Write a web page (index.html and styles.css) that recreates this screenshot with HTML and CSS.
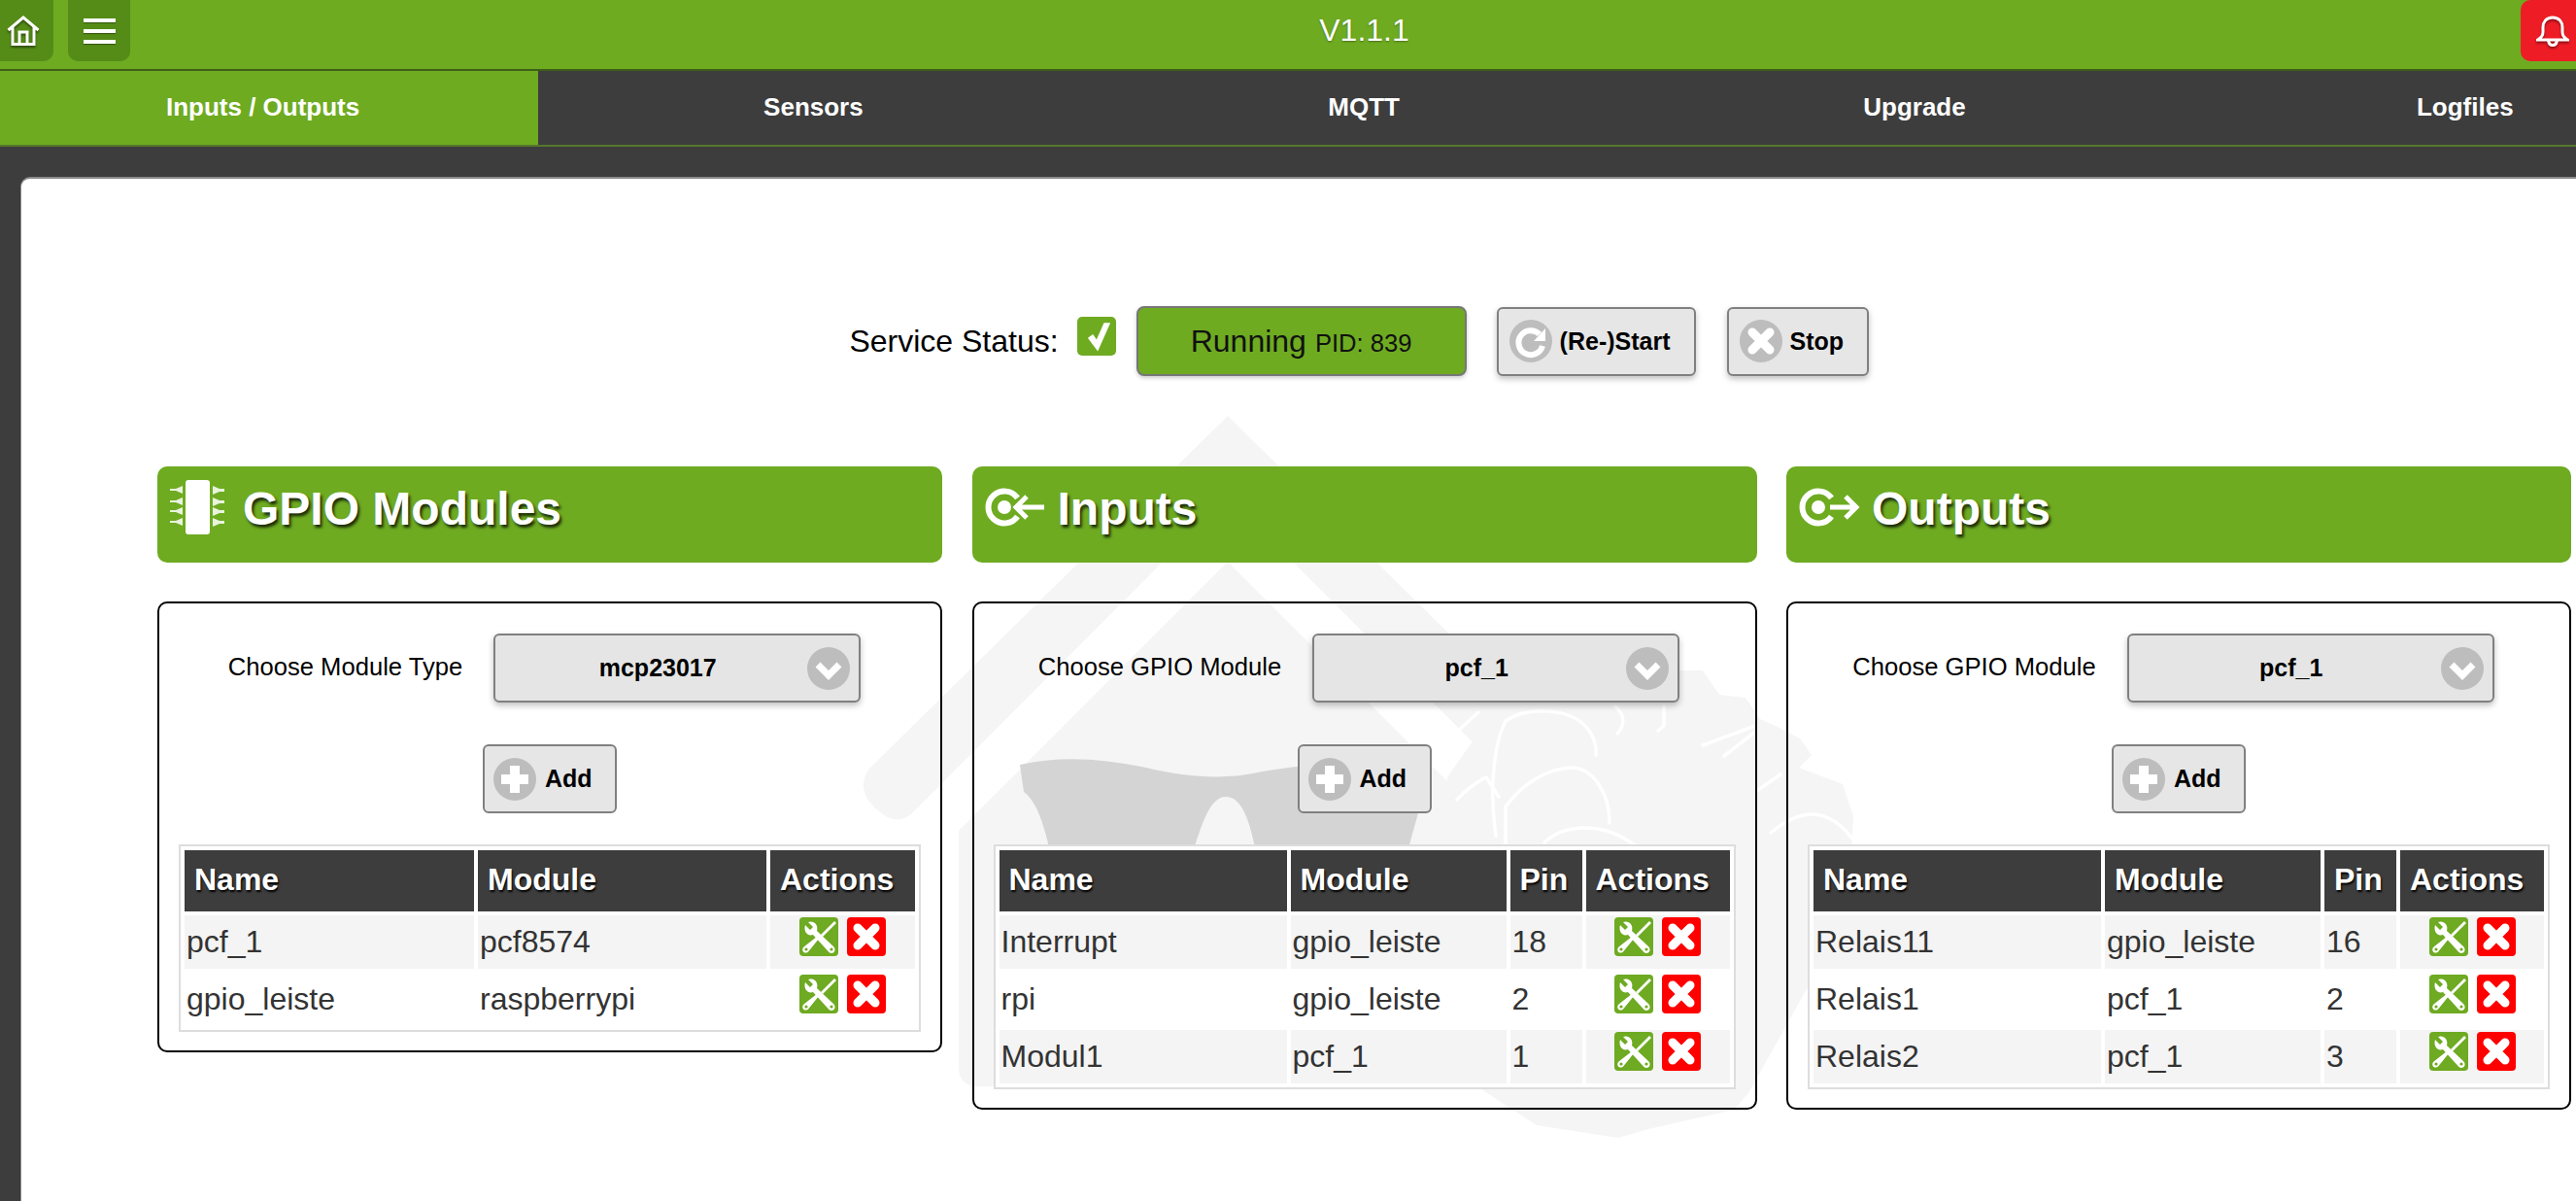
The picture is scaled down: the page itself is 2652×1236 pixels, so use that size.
FILE: index.html
```html
<!DOCTYPE html>
<html lang="en">
<head>
<meta charset="utf-8">
<title>V1.1.1</title>
<link rel="stylesheet" href="styles.css">
</head>
<body>
<svg class="sprites" width="0" height="0" aria-hidden="true">
  <symbol id="i-tools" viewBox="0 0 40 40">
    <rect width="40" height="40" rx="4" fill="#6eaa22"/>
    <path d="M6 8 L11 13 L14 10 L9 5 C14 3 20 7 18 14 L35 30 C37 32 37 34.500 35.500 36 C33.500 37.500 31 37 30 35.500 L14 18 C8 20 4 14 6 8 Z" fill="#fff"/>
    <circle cx="33" cy="33" r="1.600" fill="#6eaa22"/>
    <path d="M36 4 L38 6 L24 20 L22 18 Z" fill="#fff"/>
    <path d="M18.500 19.500 L20.500 21.500 L9.500 35 C8 37 5 37 4 35.500 C2.800 34 3 32 4.500 30.500 Z" fill="#fff"/>
    <circle cx="7" cy="33" r="1.600" fill="#6eaa22"/>
  </symbol>
  <symbol id="i-del" viewBox="0 0 40 40">
    <rect width="40" height="40" rx="4" fill="#f00"/>
    <path d="M11 11 L29 29 M29 11 L11 29" stroke="#fff" stroke-width="9" stroke-linecap="round"/>
  </symbol>
  <symbol id="i-plus" viewBox="0 0 44 44">
    <circle cx="22" cy="22" r="22" fill="#bdbdbd"/>
    <path d="M17 8 h10 v9 h9 v10 h-9 v9 h-10 v-9 h-9 v-10 h9 Z" fill="#fff"/>
  </symbol>
  <symbol id="i-down" viewBox="0 0 44 44">
    <circle cx="22" cy="22" r="22" fill="#bdbdbd"/>
    <path d="M11 18 L22 29 L33 18" fill="none" stroke="#fff" stroke-width="7"/>
  </symbol>
  <symbol id="i-refresh" viewBox="0 0 44 44">
    <circle cx="22" cy="22" r="22" fill="#bdbdbd"/>
    <path d="M31 15 A12.500 12.500 0 1 0 34 27" fill="none" stroke="#fff" stroke-width="6"/>
    <path d="M37 9 V22 H25 Z" fill="#fff"/>
  </symbol>
  <symbol id="i-x" viewBox="0 0 44 44">
    <circle cx="22" cy="22" r="22" fill="#bdbdbd"/>
    <path d="M13 13 L31 31 M31 13 L13 31" stroke="#fff" stroke-width="9" stroke-linecap="round"/>
  </symbol>
  <symbol id="i-chip" viewBox="0 0 64 64">
    <rect x="17" y="2" width="25" height="56" rx="3" fill="#fff"/>
    <path d="M1 11 h6 l7 -3 v8 l-7 -3 h-6 Z M1 23 h6 l7 -3 v8 l-7 -3 h-6 Z M1 33 h6 l7 -3 v8 l-7 -3 h-6 Z M1 44 h6 l7 -3 v8 l-7 -3 h-6 Z" fill="#fff" opacity=".85"/>
    <path d="M45 8 l7 3 h5 v3 h-5 l-7 3 Z M45 20 l7 3 h5 v3 h-5 l-7 3 Z M45 30 l7 3 h5 v3 h-5 l-7 3 Z M45 41 l7 3 h5 v3 h-5 l-7 3 Z" fill="#fff" opacity=".85"/>
  </symbol>
  <symbol id="i-in" viewBox="0 0 64 64">
    <circle cx="21" cy="30" r="7" fill="#fff"/>
    <path d="M34.500 20.500 A16.500 16.500 0 1 0 34.500 39.500" fill="none" stroke="#fff" stroke-width="6"/>
    <path d="M62 30 H33 M44 19 L33 30 L44 41" fill="none" stroke="#fff" stroke-width="5"/>
  </symbol>
  <symbol id="i-out" viewBox="0 0 64 64">
    <circle cx="21" cy="30" r="7" fill="#fff"/>
    <path d="M34.500 20.500 A16.500 16.500 0 1 0 34.500 39.500" fill="none" stroke="#fff" stroke-width="6"/>
    <path d="M33 30 H60 M49 19 L60 30 L49 41" fill="none" stroke="#fff" stroke-width="5"/>
  </symbol>
</svg>

<header class="topbar">
  <a class="topbtn topbtn-home"><svg class="ico-home" viewBox="0 0 34 32"><path d="M1.500 15 L17 2 L32.500 15 M6 12 V29.500 H28 V12 M13 29.500 V17 H21 V29.500" fill="none" stroke="#fff" stroke-width="3"/></svg></a>
  <a class="topbtn topbtn-menu"><span class="bars"></span><span class="bars"></span><span class="bars"></span></a>
  <div class="title">V1.1.1</div>
  <a class="bell"><svg class="ico-bell" viewBox="0 0 34 32"><path d="M17 2 C10 2 7 7 7 12 V17 C7 21 5 23 1.500 25 H32.500 C29 23 27 21 27 17 V12 C27 7 24 2 17 2 Z M12.500 25.500 C13 29 15 30.500 17 30.500 C19 30.500 21 29 21.500 25.500" fill="none" stroke="#fff" stroke-width="3"/></svg></a>
</header>

<nav class="tabs">
  <a class="tab tab-active">Inputs / Outputs</a>
  <a class="tab">Sensors</a>
  <a class="tab">MQTT</a>
  <a class="tab">Upgrade</a>
  <a class="tab">Logfiles</a>
</nav>

<main class="main">
  <svg class="watermark" viewBox="880 410 1100 826" width="1100" height="826" aria-hidden="true">
    <path d="M1264 428 L894 792 Q880 815 905 835 Q922 850 938 838 L1264 511 L1590 838 L1634 792 Z" fill="#f5f5f5"/>
    <path d="M1264 578 L987 855 V1098 Q987 1118 1007 1118 H1530 L1541 855 Z" fill="#f5f5f5"/>
    <path d="M1490 800 L1560 700 L1733 690 L1753 690 L1770 715 L1797 718 L1812 740 L1830 748 L1853 760 L1865 777 L1852 790 L1897 807 L1908 840 L1905 900 L1870 1000 L1800 1125 L1785 1142 L1701 1161 L1666 1171 L1582 1158 L1525 1121 L1500 1100 Z" fill="#f5f5f5"/>
    <path d="M1050 787 C1090 778 1130 780 1180 790 C1220 800 1260 802 1290 796 C1340 786 1420 780 1473 790 L1448 880 H1294 C1288 855 1282 820 1262 820 C1245 820 1237 850 1227 880 H1082 C1075 850 1068 825 1054 815 Z" fill="#d4d4d4"/>
    <g fill="none" stroke="#fff" stroke-width="3.500" stroke-linecap="round" stroke-linejoin="round">
      <path d="M1540 860 C1534 820 1536 770 1550 742 C1570 728 1610 728 1630 745 C1640 755 1644 765 1643 777"/>
      <path d="M1550 870 V830 C1565 810 1590 790 1620 790 C1640 792 1657 815 1657 847"/>
      <path d="M1500 823 C1510 812 1520 805 1530 800 L1543 820"/>
      <path d="M1590 867 C1610 848 1650 845 1683 870"/>
      <path d="M1500 753 L1522 733"/>
      <path d="M1663 727 C1672 735 1674 745 1665 755"/>
      <path d="M1713 727 V747 L1707 752"/>
      <path d="M1807 747 L1753 767"/>
      <path d="M1807 753 L1775 778"/>
      <path d="M1810 813 L1833 797"/>
      <path d="M1823 857 C1850 835 1880 825 1910 867"/>
    </g>
  </svg>

  <div class="status">
    <span class="status-label">Service Status:</span>
    <span class="check"><svg viewBox="0 0 40 40" width="40" height="40"><path d="M12 22 L21 34 L33 7 L28 7 L20 25 L16 19 Z" fill="#fff" stroke="#fff" stroke-width="1.500"/></svg></span>
    <span class="running">Running <small>PID: 839</small></span>
    <button class="btn btn-restart" type="button"><svg class="btn-ico"><use href="#i-refresh"/></svg>(Re-)Start</button>
    <button class="btn btn-stop" type="button"><svg class="btn-ico"><use href="#i-x"/></svg>Stop</button>
  </div>

  <div class="cols">
    <section class="col">
      <h2 class="col-head"><svg class="head-ico"><use href="#i-chip"/></svg>GPIO Modules</h2>
      <div class="box">
        <div class="pick">
          <label class="pick-label">Choose Module Type</label>
          <div class="select"><span>mcp23017</span><svg class="sel-ico"><use href="#i-down"/></svg></div>
        </div>
        <div class="add-row"><button class="btn btn-add" type="button"><svg class="btn-ico"><use href="#i-plus"/></svg>Add</button></div>
        <table class="grid">
          <thead><tr><th class="w-298">Name</th><th class="w-297">Module</th><th class="w-149">Actions</th></tr></thead>
          <tbody>
            <tr><td>pcf_1</td><td>pcf8574</td><td class="acts"><div class="acts-in"><svg class="act"><use href="#i-tools"/></svg><svg class="act"><use href="#i-del"/></svg></div></td></tr>
            <tr><td>gpio_leiste</td><td>raspberrypi</td><td class="acts"><div class="acts-in"><svg class="act"><use href="#i-tools"/></svg><svg class="act"><use href="#i-del"/></svg></div></td></tr>
          </tbody>
        </table>
      </div>
    </section>

    <section class="col">
      <h2 class="col-head"><svg class="head-ico"><use href="#i-in"/></svg>Inputs</h2>
      <div class="box">
        <div class="pick">
          <label class="pick-label">Choose GPIO Module</label>
          <div class="select"><span>pcf_1</span><svg class="sel-ico"><use href="#i-down"/></svg></div>
        </div>
        <div class="add-row"><button class="btn btn-add" type="button"><svg class="btn-ico"><use href="#i-plus"/></svg>Add</button></div>
        <table class="grid">
          <thead><tr><th class="w-296">Name</th><th class="w-222">Module</th><th class="w-74">Pin</th><th class="w-148">Actions</th></tr></thead>
          <tbody>
            <tr><td>Interrupt</td><td>gpio_leiste</td><td>18</td><td class="acts"><div class="acts-in"><svg class="act"><use href="#i-tools"/></svg><svg class="act"><use href="#i-del"/></svg></div></td></tr>
            <tr><td>rpi</td><td>gpio_leiste</td><td>2</td><td class="acts"><div class="acts-in"><svg class="act"><use href="#i-tools"/></svg><svg class="act"><use href="#i-del"/></svg></div></td></tr>
            <tr><td>Modul1</td><td>pcf_1</td><td>1</td><td class="acts"><div class="acts-in"><svg class="act"><use href="#i-tools"/></svg><svg class="act"><use href="#i-del"/></svg></div></td></tr>
          </tbody>
        </table>
      </div>
    </section>

    <section class="col">
      <h2 class="col-head"><svg class="head-ico"><use href="#i-out"/></svg>Outputs</h2>
      <div class="box">
        <div class="pick">
          <label class="pick-label">Choose GPIO Module</label>
          <div class="select"><span>pcf_1</span><svg class="sel-ico"><use href="#i-down"/></svg></div>
        </div>
        <div class="add-row"><button class="btn btn-add" type="button"><svg class="btn-ico"><use href="#i-plus"/></svg>Add</button></div>
        <table class="grid">
          <thead><tr><th class="w-296">Name</th><th class="w-222">Module</th><th class="w-74">Pin</th><th class="w-148">Actions</th></tr></thead>
          <tbody>
            <tr><td>Relais11</td><td>gpio_leiste</td><td>16</td><td class="acts"><div class="acts-in"><svg class="act"><use href="#i-tools"/></svg><svg class="act"><use href="#i-del"/></svg></div></td></tr>
            <tr><td>Relais1</td><td>pcf_1</td><td>2</td><td class="acts"><div class="acts-in"><svg class="act"><use href="#i-tools"/></svg><svg class="act"><use href="#i-del"/></svg></div></td></tr>
            <tr><td>Relais2</td><td>pcf_1</td><td>3</td><td class="acts"><div class="acts-in"><svg class="act"><use href="#i-tools"/></svg><svg class="act"><use href="#i-del"/></svg></div></td></tr>
          </tbody>
        </table>
      </div>
    </section>
  </div>
</main>
</body>
</html>
```

FILE: styles.css
```css
* { box-sizing: border-box; }

html, body {
  margin: 0;
  height: 100%;
  overflow: hidden;
  background: #3d3d3d;
  font-family: "Liberation Sans", Arial, sans-serif;
}

body {
  display: flex;
  flex-direction: column;
  width: 2652px;
  height: 1236px;
}

.sprites { position: absolute; }

.topbar {
  flex: none;
  display: flex;
  align-items: flex-start;
  height: 73px;
  background: #6eab21;
  border-bottom: 2px solid #3f5f18;
}

.topbtn {
  flex: none;
  display: flex;
  height: 63px;
  background: #558c17;
  border-radius: 0 0 10px 10px;
}

.topbtn-home {
  width: 64px;
  margin-left: -9px;
  align-items: center;
  justify-content: flex-end;
  padding-right: 14px;
}

.ico-home {
  width: 34px;
  height: 32px;
  filter: drop-shadow(0 2px 1px rgba(0, 0, 0, .45));
}

.topbtn-menu {
  width: 64px;
  margin-left: 15px;
  flex-direction: column;
  align-items: center;
  justify-content: center;
  gap: 7px;
}

.bars {
  width: 33px;
  height: 4px;
  background: #fff;
  box-shadow: 0 1px 1px rgba(0, 0, 0, .4);
}

.title {
  flex: 1;
  padding-left: 80px;
  height: 63px;
  line-height: 63px;
  text-align: center;
  color: #fff;
  font-size: 32px;
  text-shadow: 0 1px 2px rgba(0, 0, 0, .35);
}

.bell {
  flex: none;
  display: flex;
  align-items: center;
  justify-content: flex-end;
  width: 57px;
  height: 63px;
  padding-right: 7px;
  background: #ee1c25;
  border-radius: 10px 0 0 10px;
}

.ico-bell {
  width: 34px;
  height: 32px;
  filter: drop-shadow(0 2px 1px rgba(0, 0, 0, .4));
}

.tabs {
  flex: none;
  display: grid;
  grid-template-columns: repeat(5, 566.8px);
  width: 2834px;
  height: 78px;
  margin-left: -12.800px;
  background: #3d3d3d;
  border-bottom: 2px solid #56772b;
}

.tab {
  display: flex;
  align-items: center;
  justify-content: center;
  height: 76px;
  padding-bottom: 2px;
  color: #fff;
  font-size: 26px;
  font-weight: 700;
}

.tab-active { background: #6eab21; }

.main {
  position: relative;
  flex: 1;
  margin: 31px 0 0 21px;
  padding: 131px 0 0 140px;
  background: #fff;
  border-top: 2px solid #8c8c8c;
  border-left: 1px solid #8c8c8c;
  border-top-left-radius: 10px;
  overflow: hidden;
}

.watermark {
  position: absolute;
  left: 858px;
  top: 226px;
}

.status {
  position: relative;
  display: flex;
  align-items: center;
  justify-content: center;
  width: 2474px;
  height: 72px;
  margin-bottom: 93px;
}

.status-label {
  margin-right: 19px;
  font-size: 32px;
  color: #000;
}

.check {
  display: block;
  width: 40px;
  height: 40px;
  margin: -10px 21px 0 0;
  background: #6eab21;
  border-radius: 5px;
}

.running {
  display: flex;
  align-items: baseline;
  justify-content: center;
  gap: 9px;
  width: 340px;
  height: 72px;
  margin-right: 31px;
  line-height: 68px;
  color: #111;
  font-size: 32px;
  background: #6eab21;
  border: 2px solid #777;
  border-radius: 8px;
  box-shadow: 0 2px 4px rgba(0, 0, 0, .2);
}

.running small { font-size: 25.6px; }

.btn {
  display: inline-flex;
  align-items: center;
  height: 71px;
  padding: 0 0 0 9px;
  gap: 9px;
  color: #000;
  font-family: inherit;
  font-size: 25px;
  font-weight: 700;
  background: #e6e6e6;
  border: 2px solid #808080;
  border-radius: 6px;
}

.status .btn {
  padding-left: 11px;
  gap: 8px;
  box-shadow: 0 3px 6px rgba(0, 0, 0, .25);
}

.btn-restart { width: 205px; margin-right: 32px; }
.btn-stop { width: 146px; }
.btn-add { width: 138px; }

.btn-ico {
  flex: none;
  width: 44px;
  height: 44px;
}

.cols {
  position: relative;
  display: flex;
  align-items: flex-start;
  gap: 30.5px;
  width: 2485px;
}

.col {
  flex: none;
  width: 808px;
}

.col-head {
  display: flex;
  align-items: center;
  gap: 12px;
  height: 99px;
  margin: 0 0 40px;
  padding: 0 0 12px 12px;
  color: #fff;
  font-size: 48px;
  font-weight: 700;
  background: #6eab21;
  border-radius: 10px;
  text-shadow: 2px 3px 3px rgba(0, 0, 0, .75);
}

.head-ico {
  flex: none;
  width: 64px;
  height: 64px;
  margin-top: 1px;
}

.box {
  padding: 31px 20px 19px;
  border: 2px solid #000;
  border-radius: 10px;
}

.pick {
  display: flex;
  align-items: center;
  justify-content: center;
  gap: 32px;
  margin-right: 11px;
}

.pick-label {
  font-size: 25.6px;
  color: #000;
  margin-top: -2px;
}

.select {
  position: relative;
  display: flex;
  flex: none;
  align-items: center;
  justify-content: center;
  width: 378px;
  height: 71px;
  padding-right: 40px;
  color: #000;
  font-size: 25px;
  font-weight: 700;
  background: #e5e5e5;
  border: 2px solid #808080;
  border-radius: 6px;
  box-shadow: 0 3px 6px rgba(0, 0, 0, .25);
}

.sel-ico {
  position: absolute;
  right: 9px;
  top: 12px;
  width: 44px;
  height: 44px;
}

.add-row {
  display: flex;
  justify-content: center;
  margin: 43px 0 32px;
}

.grid {
  width: 764px;
  table-layout: fixed;
  border-collapse: separate;
  border-spacing: 4px;
  background: #fff;
  border: 2px solid #ddd;
}

.grid th {
  height: 63px;
  padding: 0 0 3px 10px;
  color: #fff;
  font-size: 32px;
  font-weight: 700;
  text-align: left;
  background: #3d3d3d;
  text-shadow: 1px 2px 2px #000;
}

.grid td {
  height: 55px;
  padding: 0 2px;
  color: #333;
  font-size: 32px;
}

.grid tbody tr:nth-child(odd) td { background: #f4f4f4; }

.w-298 { width: 298px; }
.w-297 { width: 297px; }
.w-149 { width: 149px; }
.w-296 { width: 296px; }
.w-222 { width: 222px; }
.w-74 { width: 74px; }
.w-148 { width: 148px; }

.grid td.acts { vertical-align: top; padding: 2px 0 0; }

.acts-in {
  display: flex;
  justify-content: center;
  gap: 9px;
}

.act {
  display: block;
  width: 40px;
  height: 40px;
}
```
